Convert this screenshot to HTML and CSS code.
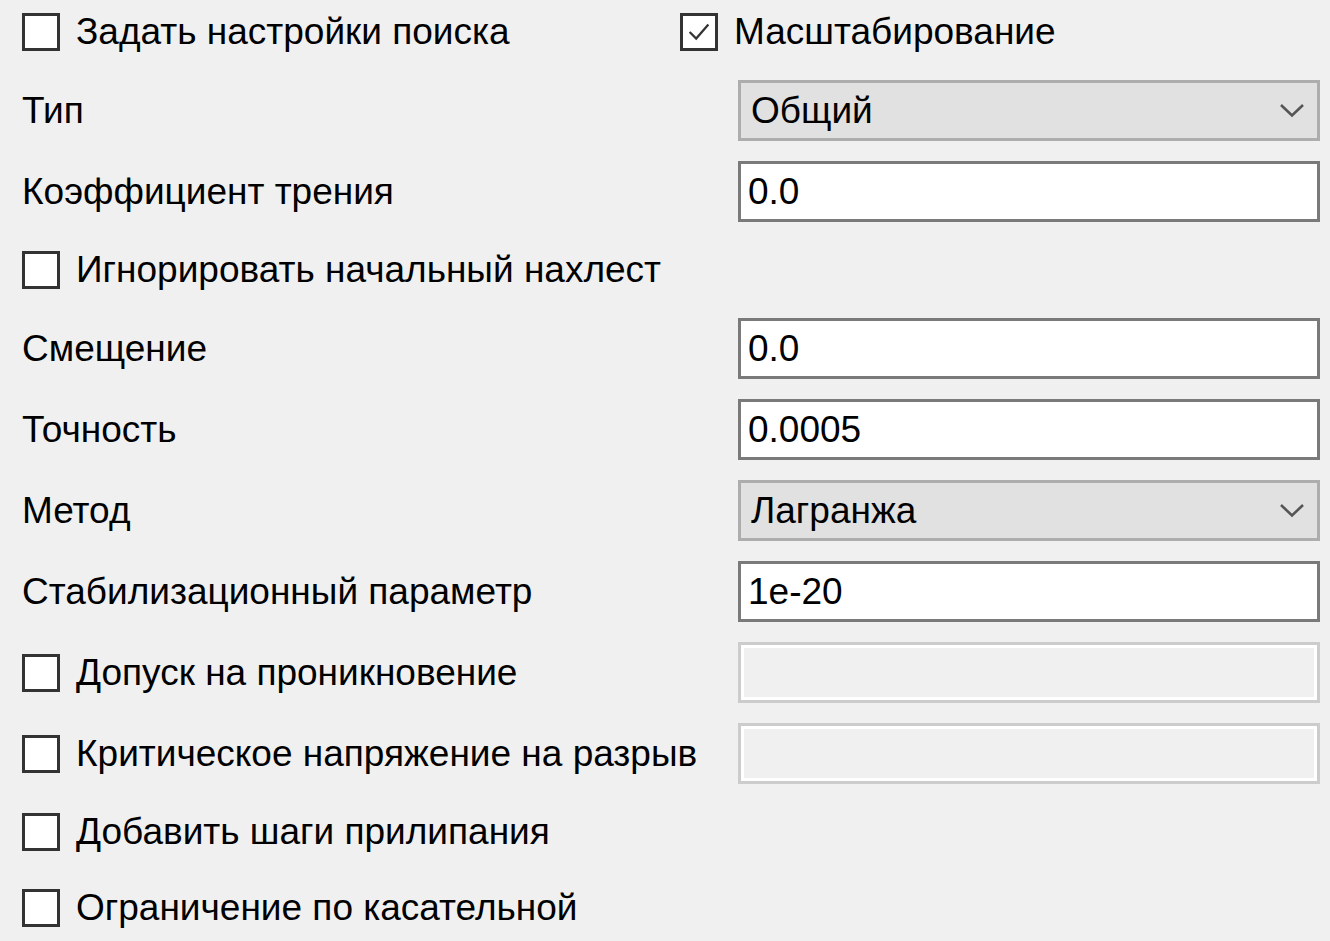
FILE: index.html
```html
<!DOCTYPE html>
<html lang="ru">
<head>
  <meta charset="UTF-8" />
  <title>Контакт</title>
  <link rel="stylesheet" href="styles.css">
</head>
<body>
  <div class="form">
    <div class="top-row">
      <label class="check"><span class="box"></span><span class="check-text">Задать настройки поиска</span></label>
      <label class="check"><span class="box checked"><svg viewBox="0 0 32 32"><path d="M6 16 L13 23 L26 8" /></svg></span><span class="check-text">Масштабирование</span></label>
    </div>

    <div class="row">
      <span class="label">Тип</span>
      <div class="combo"><span>Общий</span><svg class="chevron" viewBox="0 0 26 15"><path d="M2 2 L13 12.5 L24 2" /></svg></div>
    </div>

    <div class="row">
      <span class="label">Коэффициент трения</span>
      <input class="field" type="text" value="0.0" />
    </div>

    <div class="row short">
      <label class="check"><span class="box"></span><span class="check-text">Игнорировать начальный нахлест</span></label>
    </div>

    <div class="row">
      <span class="label">Смещение</span>
      <input class="field" type="text" value="0.0" />
    </div>

    <div class="row">
      <span class="label">Точность</span>
      <input class="field" type="text" value="0.0005" />
    </div>

    <div class="row">
      <span class="label">Метод</span>
      <div class="combo"><span>Лагранжа</span><svg class="chevron" viewBox="0 0 26 15"><path d="M2 2 L13 12.5 L24 2" /></svg></div>
    </div>

    <div class="row">
      <span class="label">Стабилизационный параметр</span>
      <input class="field" type="text" value="1e-20" />
    </div>

    <div class="row">
      <label class="check"><span class="box"></span><span class="check-text">Допуск на проникновение</span></label>
      <input class="field" type="text" value="" disabled />
    </div>

    <div class="row">
      <label class="check"><span class="box"></span><span class="check-text">Критическое напряжение на разрыв</span></label>
      <input class="field" type="text" value="" disabled />
    </div>

    <div class="row short">
      <label class="check"><span class="box"></span><span class="check-text">Добавить шаги прилипания</span></label>
    </div>

    <div class="row short">
      <label class="check"><span class="box"></span><span class="check-text">Ограничение по касательной</span></label>
    </div>
  </div>
</body>
</html>
```

FILE: styles.css
```css
    body {
      font-family: "Liberation Sans", Arial, sans-serif;
      background-color: #f0f0f0;
      color: #000;
      margin: 0;
      font-size: 37px;
    }
    .form {
      display: flex;
      flex-direction: column;
      gap: 20px;
      padding: 4px 10px 0 22px;
    }
    .top-row {
      display: grid;
      grid-template-columns: 658px 1fr;
      height: 56px;
      align-items: center;
    }
    .row {
      display: grid;
      grid-template-columns: 716px 1fr;
      height: 61px;
      align-items: center;
    }
    .row.short {
      height: 56px;
    }
    .label {
      white-space: nowrap;
    }
    .check {
      display: flex;
      align-items: center;
      gap: 16px;
      white-space: nowrap;
    }
    .box {
      width: 38px;
      height: 38px;
      box-sizing: border-box;
      border: 3px solid #333;
      background: #fff;
      display: flex;
      align-items: center;
      justify-content: center;
      flex: none;
    }
    .box svg {
      width: 30px;
      height: 30px;
    }
    .box svg path {
      fill: none;
      stroke: #333;
      stroke-width: 2.4;
    }
    .combo {
      height: 61px;
      box-sizing: border-box;
      background: #e1e1e1;
      border: 3px solid #adadad;
      display: flex;
      align-items: center;
      justify-content: space-between;
      padding: 0 12px 0 10px;
    }
    .chevron {
      width: 26px;
      height: 15px;
    }
    .chevron path {
      fill: none;
      stroke: #555;
      stroke-width: 2.6;
    }
    .field {
      height: 61px;
      width: 100%;
      box-sizing: border-box;
      margin: 0;
      border: 3px solid #7a7a7a;
      background: #fff;
      font-family: inherit;
      font-size: 37px;
      color: #000;
      padding: 0 7px;
      outline: none;
    }
    .field:disabled {
      border-color: #cccccc;
      background: #f0f0f0;
      box-shadow: inset 0 0 0 3px #fff;
    }
```
